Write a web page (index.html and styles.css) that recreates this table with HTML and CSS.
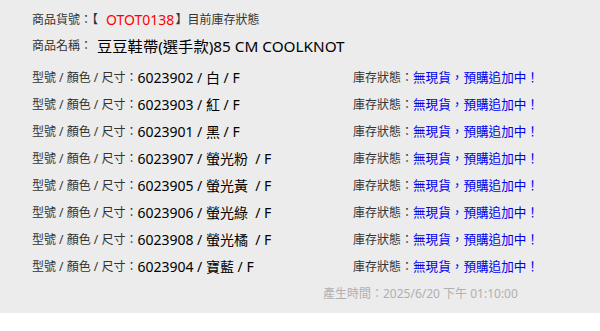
FILE: index.html
```html
<!DOCTYPE html>
<html lang="zh-Hant">
<head>
<meta charset="utf-8">
<link rel="stylesheet" href="styles.css">
</head>
<body>
<div class="panel">
  <div class="line"><span class="lbl">商品貨號：【</span><span class="code">OTOT0138</span><span class="lbl">】目前庫存狀態</span></div>
  <div class="line"><span class="lbl">商品名稱：</span><span class="name">豆豆鞋帶(選手款)85 CM COOLKNOT</span></div>
  <div class="rows">
    <div class="row"><div class="left"><span class="lbl">型號 / 顏色 / 尺寸：</span><span class="val">6023902 / 白 / F</span></div><div class="status"><span class="lbl">庫存狀態：</span><span class="st">無現貨，預購追加中！</span></div></div>
    <div class="row"><div class="left"><span class="lbl">型號 / 顏色 / 尺寸：</span><span class="val">6023903 / 紅 / F</span></div><div class="status"><span class="lbl">庫存狀態：</span><span class="st">無現貨，預購追加中！</span></div></div>
    <div class="row"><div class="left"><span class="lbl">型號 / 顏色 / 尺寸：</span><span class="val">6023901 / 黑 / F</span></div><div class="status"><span class="lbl">庫存狀態：</span><span class="st">無現貨，預購追加中！</span></div></div>
    <div class="row"><div class="left"><span class="lbl">型號 / 顏色 / 尺寸：</span><span class="val">6023907 / 螢光粉 &nbsp;/ F</span></div><div class="status"><span class="lbl">庫存狀態：</span><span class="st">無現貨，預購追加中！</span></div></div>
    <div class="row"><div class="left"><span class="lbl">型號 / 顏色 / 尺寸：</span><span class="val">6023905 / 螢光黃 &nbsp;/ F</span></div><div class="status"><span class="lbl">庫存狀態：</span><span class="st">無現貨，預購追加中！</span></div></div>
    <div class="row"><div class="left"><span class="lbl">型號 / 顏色 / 尺寸：</span><span class="val">6023906 / 螢光綠 &nbsp;/ F</span></div><div class="status"><span class="lbl">庫存狀態：</span><span class="st">無現貨，預購追加中！</span></div></div>
    <div class="row"><div class="left"><span class="lbl">型號 / 顏色 / 尺寸：</span><span class="val">6023908 / 螢光橘 &nbsp;/ F</span></div><div class="status"><span class="lbl">庫存狀態：</span><span class="st">無現貨，預購追加中！</span></div></div>
    <div class="row"><div class="left"><span class="lbl">型號 / 顏色 / 尺寸：</span><span class="val">6023904 / 寶藍 / F</span></div><div class="status"><span class="lbl">庫存狀態：</span><span class="st">無現貨，預購追加中！</span></div></div>
  </div>
  <div class="footer">產生時間：2025/6/20 下午 01:10:00</div>
</div>
</body>
</html>
```
FILE: styles.css
```css
html, body {
  margin: 0;
  padding: 0;
  background: #ffffff;
}
body {
  font-family: "Noto Sans", "Noto Sans CJK TC", sans-serif;
  color: #000;
}
.panel {
  background: #ececec;
  height: 313px;
  box-sizing: border-box;
  padding: 6px 0 0 32px;
}
.line {
  height: 26px;
  display: flex;
  align-items: center;
  white-space: nowrap;
}
.line + .line {
  height: 25px;
}
.lbl {
  font-size: 12px;
  color: #333;
}
.code {
  font-size: 14px;
  color: #ff0000;
  margin-left: 8px;
  margin-right: 1px;
}
.name {
  font-size: 15.3px;
  color: #000;
  margin-left: 5px;
}
.rows {
  margin-top: 6px;
}
.row {
  height: 27px;
  display: flex;
  align-items: center;
  white-space: nowrap;
}
.left {
  width: 321px;
  display: flex;
  align-items: center;
}
.val {
  font-size: 14px;
  color: #000;
}
.status {
  display: flex;
  align-items: center;
}
.st {
  font-size: 12.6px;
  color: #0000ee;
}
.footer {
  height: 28px;
  display: flex;
  align-items: center;
  margin-left: 291px;
  font-size: 12px;
  color: #b0b0b0;
}
```
